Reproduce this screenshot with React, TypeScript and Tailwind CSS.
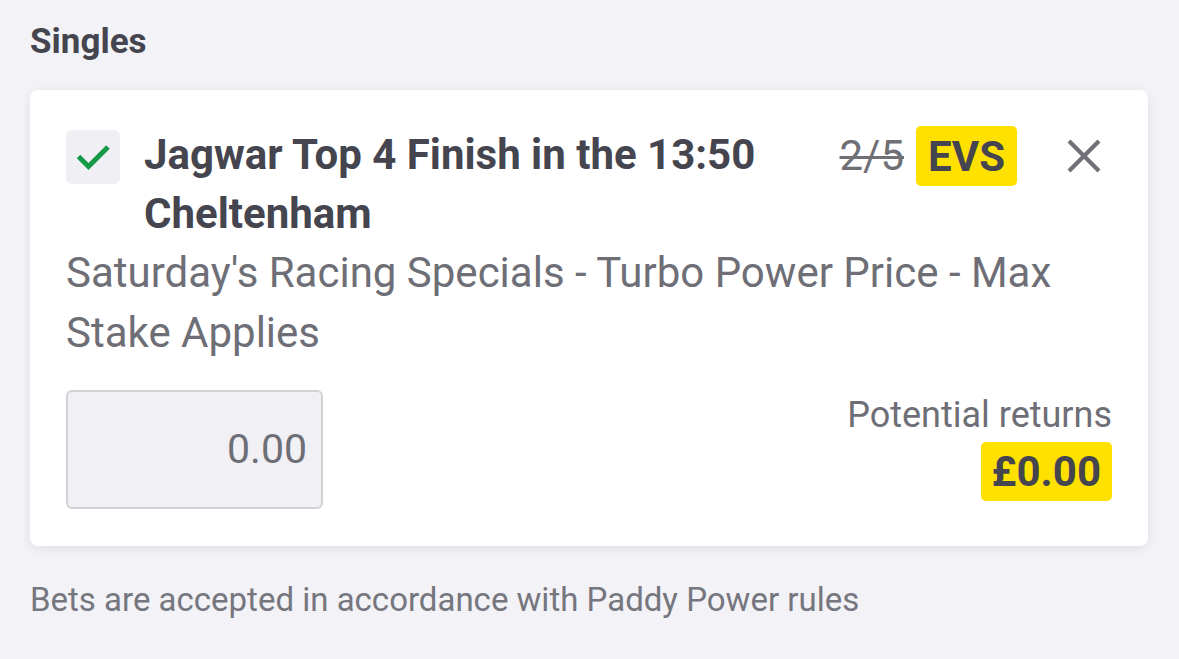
import React from "react";

const font = { fontFamily: "Roboto, 'Noto Sans', sans-serif" };

function CheckIcon() {
  return (
    <svg width="36" height="28" viewBox="0 0 36 28" fill="none">
      <path d="M3.5 13.5l10 10L33 4" stroke="#17994a" strokeWidth="5" />
    </svg>
  );
}

function CloseIcon() {
  return (
    <svg width="34" height="34" viewBox="0 0 34 34" fill="none">
      <path d="M2 2l30 30M32 2L2 32" stroke="#707078" strokeWidth="4.2" />
    </svg>
  );
}

export default function App() {
  return (
    <div
      className="w-[1179px] h-[659px] bg-[#f2f2f7] px-[30px] pt-[18px] overflow-hidden"
      style={font}
    >
      <h2 className="text-[35px] leading-[48px] font-bold text-[#45454f]">Singles</h2>

      <div className="mt-[24px] w-[1118px] bg-white rounded-[8px] shadow-[0_3px_12px_rgba(0,0,0,0.08)] px-[36px] pt-[35px] pb-[37px]">
        <div className="flex items-start">
          <div className="mt-[5px] w-[54px] h-[54px] rounded-[6px] bg-[#f0f0f4] flex items-center justify-center shrink-0">
            <CheckIcon />
          </div>
          <div className="ml-[24px] flex-1 text-[42px] leading-[59px] font-bold text-[#45454f] pr-[30px]">
            Jagwar Top 4 Finish in the 13:50 Cheltenham
          </div>
          <div className="flex items-center mt-[1px] shrink-0">
            <span className="text-[42px] leading-[50px] text-[#6f6f75] line-through decoration-[3px]">2/5</span>
            <span className="ml-[12px] h-[60px] px-[12px] rounded-[5px] bg-[#ffe100] flex items-center text-[42px] font-bold text-[#45454f]">
              EVS
            </span>
            <span className="ml-[50px] mr-[11px] flex items-center">
              <CloseIcon />
            </span>
          </div>
        </div>

        <p className="text-[42px] leading-[60px] text-[#6e6e76]">
          Saturday's Racing Specials - Turbo Power Price - Max Stake Applies
        </p>

        <div className="mt-[27px] flex items-start justify-between">
          <div className="w-[257px] h-[119px] rounded-[6px] border-2 border-[#d3d3d7] bg-[#f0f0f5] flex items-center justify-end pr-[14px] text-[41px] text-[#6e6e76]">
            0.00
          </div>
          <div className="flex flex-col items-end mt-[3px]">
            <span className="text-[36px] leading-[44px] text-[#6e6e76]">Potential returns</span>
            <span className="mt-[5px] h-[59px] px-[11px] rounded-[5px] bg-[#ffe100] flex items-center text-[42px] font-bold text-[#45454f]">
              £0.00
            </span>
          </div>
        </div>
      </div>

      <p className="mt-[32px] text-[33px] leading-[44px] text-[#76767e]">
        Bets are accepted in accordance with Paddy Power rules
      </p>
    </div>
  );
}
